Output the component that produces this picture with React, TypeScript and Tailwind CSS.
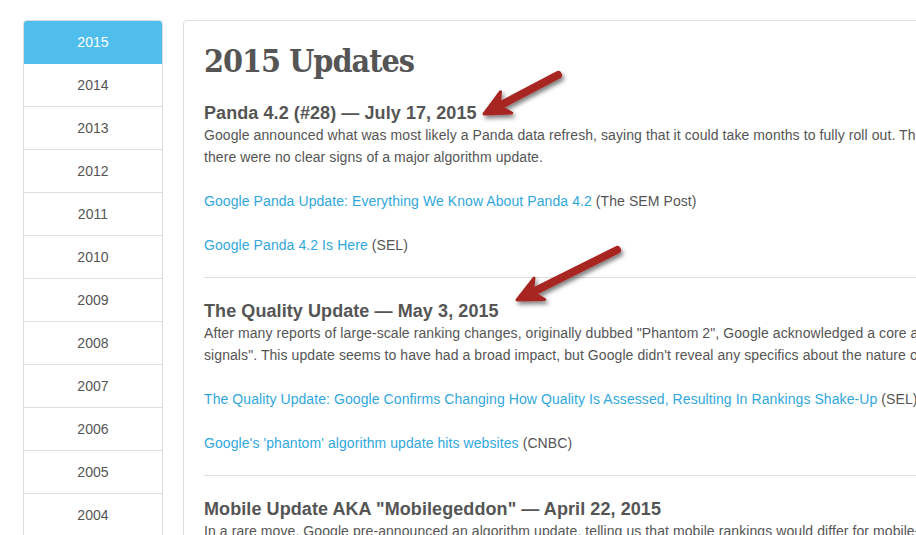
import React from "react";

const years = [
  "2015", "2014", "2013", "2012", "2011", "2010", "2009", "2008",
  "2007", "2006", "2005", "2004", "2003", "2002",
];

type Link = { title: string; source: string };
type Update = { heading: string; text: string; links: Link[] };

const updates: Update[] = [
  {
    heading: "Panda 4.2 (#28) — July 17, 2015",
    text:
      "Google announced what was most likely a Panda data refresh, saying that it could take months to fully roll out. The immediate impact was unclear, and there were no clear signs of a major algorithm update.",
    links: [
      { title: "Google Panda Update: Everything We Know About Panda 4.2", source: "(The SEM Post)" },
      { title: "Google Panda 4.2 Is Here", source: "(SEL)" },
    ],
  },
  {
    heading: "The Quality Update — May 3, 2015",
    text:
      'After many reports of large-scale ranking changes, originally dubbed "Phantom 2", Google acknowledged a core algorithm change impacting "quality signals". This update seems to have had a broad impact, but Google didn\'t reveal any specifics about the nature of the signals.',
    links: [
      {
        title:
          "The Quality Update: Google Confirms Changing How Quality Is Assessed, Resulting In Rankings Shake-Up",
        source: "(SEL)",
      },
      { title: "Google's 'phantom' algorithm update hits websites", source: "(CNBC)" },
    ],
  },
  {
    heading: 'Mobile Update AKA "Mobilegeddon" — April 22, 2015',
    text:
      "In a rare move, Google pre-announced an algorithm update, telling us that mobile rankings would differ for mobile-friendly sites starting on April 21st. The impact of this update was, in the short-term, much smaller than expected.",
    links: [],
  },
];

// annotation arrow: shaft + head, from tail to tip
const Arrow = ({ tail, tip }: { tail: [number, number]; tip: [number, number] }) => {
  const dx = tip[0] - tail[0];
  const dy = tip[1] - tail[1];
  const len = Math.hypot(dx, dy);
  const ux = dx / len;
  const uy = dy / len;
  const nx = -uy;
  const ny = ux;
  const headLen = 25;
  const half = 12;
  const bx = tip[0] - ux * headLen;
  const by = tip[1] - uy * headLen;
  const notchX = tip[0] - ux * 17;
  const notchY = tip[1] - uy * 17;
  const pts = [
    [tip[0], tip[1]],
    [bx + nx * half, by + ny * half],
    [notchX, notchY],
    [bx - nx * half, by - ny * half],
  ]
    .map((p) => p.join(","))
    .join(" ");
  return (
    <g filter="url(#arrowShadow)">
      <line
        x1={tail[0]}
        y1={tail[1]}
        x2={notchX}
        y2={notchY}
        stroke="#a82523"
        strokeWidth={8}
        strokeLinecap="round"
      />
      <polygon points={pts} fill="#a82523" stroke="#a82523" strokeWidth={3} strokeLinejoin="round" />
    </g>
  );
};

const App = () => {
  return (
    <div className="relative h-[535px] w-[916px] overflow-hidden bg-white font-['Liberation_Sans',Arial,sans-serif] text-[14px] tracking-[0.08px] text-[#555]">
      <div className="flex items-start gap-[20px] pl-[23px] pt-[20px]">
        <ul className="w-[140px] shrink-0 overflow-hidden rounded-t-[4px] border border-[#ddd]">
          {years.map((y, i) => (
            <li
              key={y}
              className={
                i === 0
                  ? "flex h-[43px] items-center justify-center border-b border-[#4fbeec] bg-[#4fbeec] text-white"
                  : "flex h-[43px] items-center justify-center border-b border-[#ddd] bg-white"
              }
            >
              {y}
            </li>
          ))}
        </ul>

        <main className="w-[997px] shrink-0 rounded-[4px] border border-[#ddd] px-[20px]">
          <h1 className="mt-[20px] mb-[22px] font-['DejaVu_Serif_Condensed','DejaVu_Serif',serif] text-[32px] leading-[40px] font-bold tracking-[-1px] text-[#555] font-stretch-condensed">
            2015 Updates
          </h1>

          {updates.map((u) => (
            <section key={u.heading}>
              <h2 className="text-[18px] leading-[21px] font-bold text-[#555]">{u.heading}</h2>
              <p className="leading-[22px]">{u.text}</p>
              {u.links.map((l) => (
                <p key={l.title} className="mt-[22px] leading-[22px]">
                  <a href="#" className="text-[#31a8dc]">
                    {l.title}
                  </a>{" "}
                  {l.source}
                </p>
              ))}
              <hr className="mt-[21px] mb-[23px] border-t border-[#ddd]" />
            </section>
          ))}
        </main>
      </div>

      <svg className="pointer-events-none absolute inset-0" width={916} height={535}>
        <defs>
          <filter id="arrowShadow" x="-20%" y="-20%" width="150%" height="160%">
            <feDropShadow dx="2" dy="3" stdDeviation="2" floodColor="#000" floodOpacity="0.5" />
          </filter>
        </defs>
        <Arrow tail={[558, 75]} tip={[484, 114]} />
        <Arrow tail={[617, 250]} tip={[517, 300]} />
      </svg>
    </div>
  );
};

export default App;
